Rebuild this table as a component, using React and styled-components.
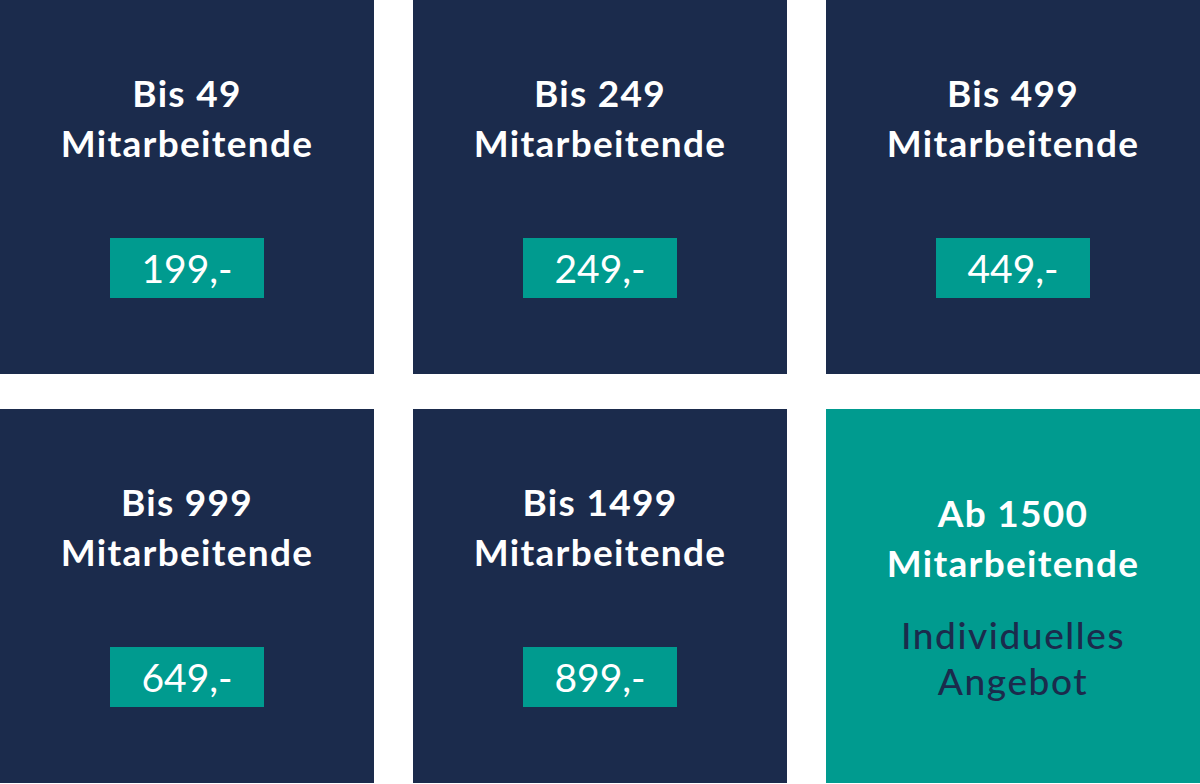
import styled, { createGlobalStyle } from 'styled-components';

const GlobalStyle = createGlobalStyle`
    body {
        margin: 0;
        background-color: #FFFFFF;
        font-family: 'Lato', 'Open Sans', sans-serif;
    }
`

const plaene = [
    { titel: 'Bis 49', preis: '199,-' },
    { titel: 'Bis 249', preis: '249,-' },
    { titel: 'Bis 499', preis: '449,-' },
    { titel: 'Bis 999', preis: '649,-' },
    { titel: 'Bis 1499', preis: '899,-' },
    { titel: 'Ab 1500', angebot: true },
];

export default function App() {
    return (
        <>
            <GlobalStyle />
            <Raster>
                {plaene.map((plan) =>
                    <Karte key={plan.titel} $hervor={plan.angebot}>
                        <Titel $hervor={plan.angebot}>{plan.titel}<br />Mitarbeitende</Titel>
                        {plan.angebot
                            ? <Angebot>Individuelles<br />Angebot</Angebot>
                            : <Preis>{plan.preis}</Preis>}
                    </Karte>
                )}
            </Raster>
        </>
    )
}

const Raster = styled.div`
    display: grid;
    grid-template-columns: repeat(3, 374px);
    grid-auto-rows: 374px;
    column-gap: 39px;
    row-gap: 35px;
    width: 1200px;
`
const Karte = styled.div`
    background-color: ${(p) => p.$hervor ? '#009B8F' : '#1B2B4C'};
    display: flex;
    flex-direction: column;
    align-items: center;
    justify-content: center;
    text-align: center;
    padding-bottom: ${(p) => p.$hervor ? '0' : '8px'};
    box-sizing: border-box;
`
const Titel = styled.h2`
    margin: 0 0 ${(p) => p.$hervor ? '24px' : '70px'} 0;
    font-family: 'Lato', 'Open Sans', sans-serif;
    font-weight: 700;
    font-size: 37px;
    letter-spacing: 1.3px;
    line-height: 50px;
    color: #FFFFFF;
`
const Preis = styled.div`
    background-color: #009B8F;
    color: #FFFFFF;
    font-family: 'Lato', 'Open Sans', sans-serif;
    font-weight: 400;
    font-size: 39px;
    line-height: 60px;
    height: 60px;
    padding: 0 31px;
`
const Angebot = styled.div`
    font-family: 'Lato', 'Open Sans', sans-serif;
    font-weight: 500;
    font-size: 37px;
    letter-spacing: 1.6px;
    line-height: 46px;
    color: #1B2B4C;
`
